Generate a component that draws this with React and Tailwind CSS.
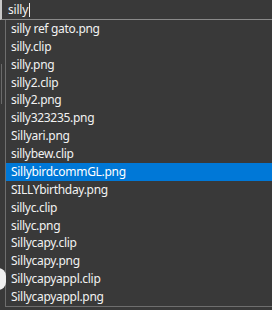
const items = [
  'silly ref gato.png',
  'silly.clip',
  'silly.png',
  'silly2.clip',
  'silly2.png',
  'silly323235.png',
  'Sillyari.png',
  'sillybew.clip',
  'SillybirdcommGL.png',
  'SILLYbirthday.png',
  'sillyc.clip',
  'sillyc.png',
  'Sillycapy.clip',
  'Sillycapy.png',
  'Sillycapyappl.clip',
  'Sillycapyappl.png',
];

export default function App() {
  const selected = 8;
  return (
    <div
      className="w-[272px] h-[310px] bg-[#393939] text-[#f2f2f2] overflow-hidden relative"
      style={{ fontFamily: '"Noto Sans", "Open Sans", sans-serif' }}
    >
      {/* search input */}
      <div className="h-[20px] flex items-center border-l-2 border-[#c8c8c8] border-b border-b-[#8a8a8a] pl-[6px] text-[12px] leading-none tracking-[-0.2px]">
        <span>silly</span>
        <span className="w-px h-[14px] bg-[#f2f2f2] ml-px" />
      </div>

      <div className="flex">
        {/* background strip peeking out on the left */}
        <div className="w-[5px] relative shrink-0">
          <div className="absolute left-[1px] top-[44px] h-[40px] w-px bg-[#6a6a6a]" />
          <div className="absolute -left-[10px] top-[248px] w-[16px] h-[22px] rounded-full bg-[#f0f0f0]" />
        </div>

        {/* dropdown list */}
        <div className="flex-1 border-l border-b border-[#6e6e6e] bg-[#393939]">
          {items.map((name, i) => (
            <div
              key={name}
              className={
                'h-[17.875px] flex items-center pl-[5px] text-[12px] leading-none tracking-[-0.3px] whitespace-nowrap ' +
                (i === selected ? 'bg-[#0078d7] text-white' : '')
              }
            >
              {name}
            </div>
          ))}
        </div>
      </div>
    </div>
  );
}
